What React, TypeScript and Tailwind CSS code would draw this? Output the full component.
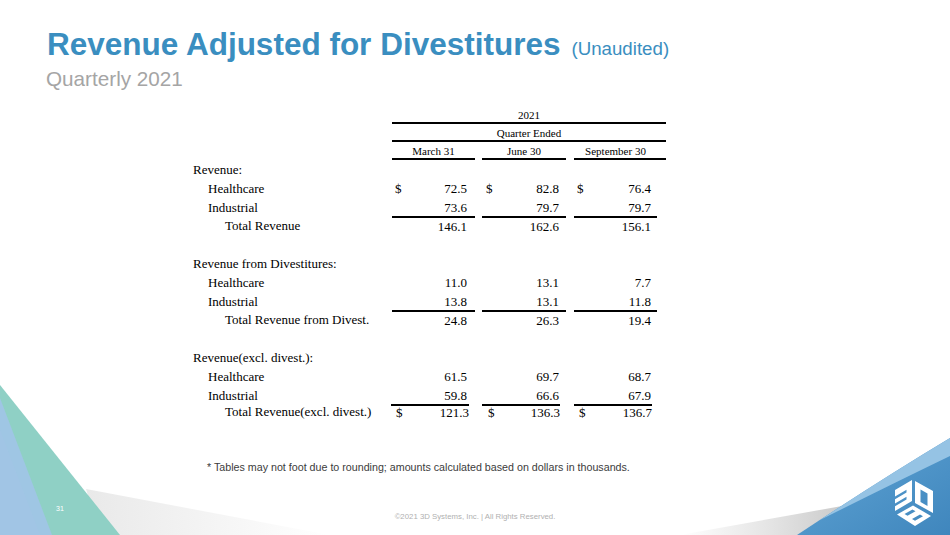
import React from "react";

type Val = string | null;

interface RowProps {
  label: string;
  indent?: 0 | 1 | 2;
  values?: [Val, Val, Val];
  dollar?: boolean;
  line?: boolean;
  h?: string;
}

const colW = ["w-[83px]", "w-[84px]", "w-[83px]"];
const colGap = ["mr-[7px]", "mr-[8px]", ""];
const padR = ["pr-[8px]", "pr-[7px]", "pr-[6px]"];
const padL = ["pl-[3px]", "pl-[4px]", "pl-[3px]"];

const indentCls = { 0: "pl-0", 1: "pl-[15px]", 2: "pl-[32px]" };

const Row = ({ label, indent = 0, values, dollar, line, h = "h-[19px]" }: RowProps) => (
  <div className={`flex ${h}`}>
    <div className={`w-[199px] flex items-center ${indentCls[indent]}`}>{label}</div>
    {values &&
      values.map((v, i) => (
        <div
          key={i}
          className={`${colW[i]} ${colGap[i]} ${padR[i]} ${padL[i]} flex items-center justify-between ${line ? "border-t-2 border-black" : ""}`}
        >
          <span>{dollar ? "$" : ""}</span>
          <span>{v}</span>
        </div>
      ))}
  </div>
);

// 3D Systems cube mark, white on the blue swoosh
const Logo = () => (
  <svg width="44" height="48" viewBox="0 0 44 48" fill="white">
    {/* 3 */}
    <path
      d="M3 11 L20 1 L20 22 L3 32 Z M3 17.5 L14.5 10.8 L14.5 13.6 L3 20.3 Z M3 24.5 L14.5 17.8 L14.5 20.6 L3 27.3 Z"
      fillRule="evenodd"
    />
    {/* D */}
    <path d="M23 2 L41 12 L41 34 L23 24 Z M28.5 10.5 L35.5 14.4 L35.5 27 L28.5 23.1 Z" fillRule="evenodd" />
    {/* S */}
    <path
      d="M5 35.5 L21 26.5 L39 37 L23 47 Z M12.5 35 L20.5 30.5 L23.5 32.2 L15.5 36.7 Z M20 40 L28 35.5 L31 37.2 L23 41.7 Z"
      fillRule="evenodd"
    />
  </svg>
);

const Background = () => (
  <svg className="absolute inset-0" width="950" height="535" viewBox="0 0 950 535">
    <defs>
      <linearGradient id="grayL" x1="0" y1="0" x2="1" y2="0">
        <stop offset="0" stopColor="#e9e9e9" />
        <stop offset="1" stopColor="#ffffff" />
      </linearGradient>
      <linearGradient id="grayR" x1="0" y1="0" x2="1" y2="0">
        <stop offset="0" stopColor="#ffffff" />
        <stop offset="0.5" stopColor="#e4e4e4" />
        <stop offset="1" stopColor="#c4c4c4" />
      </linearGradient>
      <linearGradient id="blueR" x1="0" y1="0" x2="1" y2="1">
        <stop offset="0" stopColor="#62a6d6" />
        <stop offset="1" stopColor="#3f86bd" />
      </linearGradient>
    </defs>
    {/* left */}
    <polygon points="86,489 330,535 100,535" fill="url(#grayL)" />
    <polygon points="0,385 120,535 0,535" fill="#8fd0c5" />
    <polygon points="0,398 52,535 0,535" fill="#9fc6e4" />
    <polygon points="0,430 40,535 0,535" fill="#a3c4e6" opacity="0.6" />
    {/* right */}
    <polygon points="680,535 842,506 862,535" fill="url(#grayR)" />
    <path d="M950 438 Q 880 480 797 535 L950 535 Z" fill="url(#blueR)" />
    <path d="M950 438 Q 880 480 820 520 Q 890 485 950 456 Z" fill="#95c3e4" />
  </svg>
);

export default function App() {
  return (
    <div className="relative w-[950px] h-[535px] overflow-hidden bg-white">
      <Background />
      <div className="relative flex flex-col">
        <div className="pl-[47px] pt-[29px] flex items-baseline font-['Liberation_Sans',Arial,sans-serif] text-[#3a8ec0]">
          <h1 className="text-[31.5px] leading-none font-bold">Revenue Adjusted for Divestitures</h1>
          <span className="ml-[11px] text-[18.7px] leading-none">(Unaudited)</span>
        </div>
        <div className="pl-[46px] mt-[8px] text-[20.7px] leading-none text-[#a5a5a5] font-['Liberation_Sans',Arial,sans-serif]">
          Quarterly 2021
        </div>

        <div className="ml-[193px] mt-[19px] font-['Liberation_Serif','Times_New_Roman',serif] text-[13px] leading-none text-black">
          <div className="ml-[199px] w-[274px] text-[11px]">
            <div className="h-[16px] flex items-end justify-center pb-[1px] border-b-2 border-black">2021</div>
            <div className="h-[18px] flex items-end justify-center pb-[1px] border-b-2 border-black">Quarter Ended</div>
            <div className="flex">
              <div className="w-[83px] mr-[7px] h-[18px] flex items-end justify-center pb-[1px] border-b-2 border-black">March 31</div>
              <div className="w-[84px] mr-[8px] h-[18px] flex items-end justify-center pb-[1px] border-b-2 border-black">June 30</div>
              <div className="w-[92px] pr-[9px] h-[18px] flex items-end justify-center pb-[1px] border-b-2 border-black">September 30</div>
            </div>
          </div>

          <Row label="Revenue:" />
          <Row label="Healthcare" indent={1} values={["72.5", "82.8", "76.4"]} dollar />
          <Row label="Industrial" indent={1} values={["73.6", "79.7", "79.7"]} h="h-[18px]" />
          <Row label="Total Revenue" indent={2} values={["146.1", "162.6", "156.1"]} line />

          <div className="h-[19px]" />
          <Row label="Revenue from Divestitures:" />
          <Row label="Healthcare" indent={1} values={["11.0", "13.1", "7.7"]} />
          <Row label="Industrial" indent={1} values={["13.8", "13.1", "11.8"]} h="h-[18px]" />
          <Row label="Total Revenue from Divest." indent={2} values={["24.8", "26.3", "19.4"]} line />

          <div className="h-[19px]" />
          <Row label="Revenue(excl. divest.):" />
          <Row label="Healthcare" indent={1} values={["61.5", "69.7", "68.7"]} />
          <Row label="Industrial" indent={1} values={["59.8", "66.6", "67.9"]} h="h-[18px]" />
          <div className="flex h-[14px]">
            <div className="w-[199px] pl-[32px] flex items-center">Total Revenue(excl. divest.)</div>
            {[
              ["121.3", "w-[78px] ml-[-1px] mr-[13px] pl-[5px]"],
              ["136.3", "w-[78px] mr-[14px] pl-[6px]"],
              ["136.7", "w-[78px] pl-[5px]"],
            ].map(([v, cls]) => (
              <div key={v} className={`${cls} border-t-2 border-black flex items-center justify-between`}>
                <span>$</span>
                <span>{v}</span>
              </div>
            ))}
          </div>
        </div>

        <div className="ml-[207px] mt-[44px] text-[10.7px] leading-none text-[#3c3c3c] font-['Liberation_Sans',Arial,sans-serif]">
          * Tables may not foot due to rounding; amounts calculated based on dollars in thousands.
        </div>
        <div className="mt-[40px] w-full text-center text-[7.8px] leading-none text-[#b0b0b0] font-['Liberation_Sans',Arial,sans-serif]">
          ©2021 3D Systems, Inc. | All Rights Reserved.
        </div>
      </div>

      <span className="absolute left-[56px] top-[505px] text-[7px] leading-none text-white font-['Liberation_Sans',Arial,sans-serif]">31</span>
      <div className="absolute left-[892px] top-[479px]">
        <Logo />
      </div>
    </div>
  );
}
